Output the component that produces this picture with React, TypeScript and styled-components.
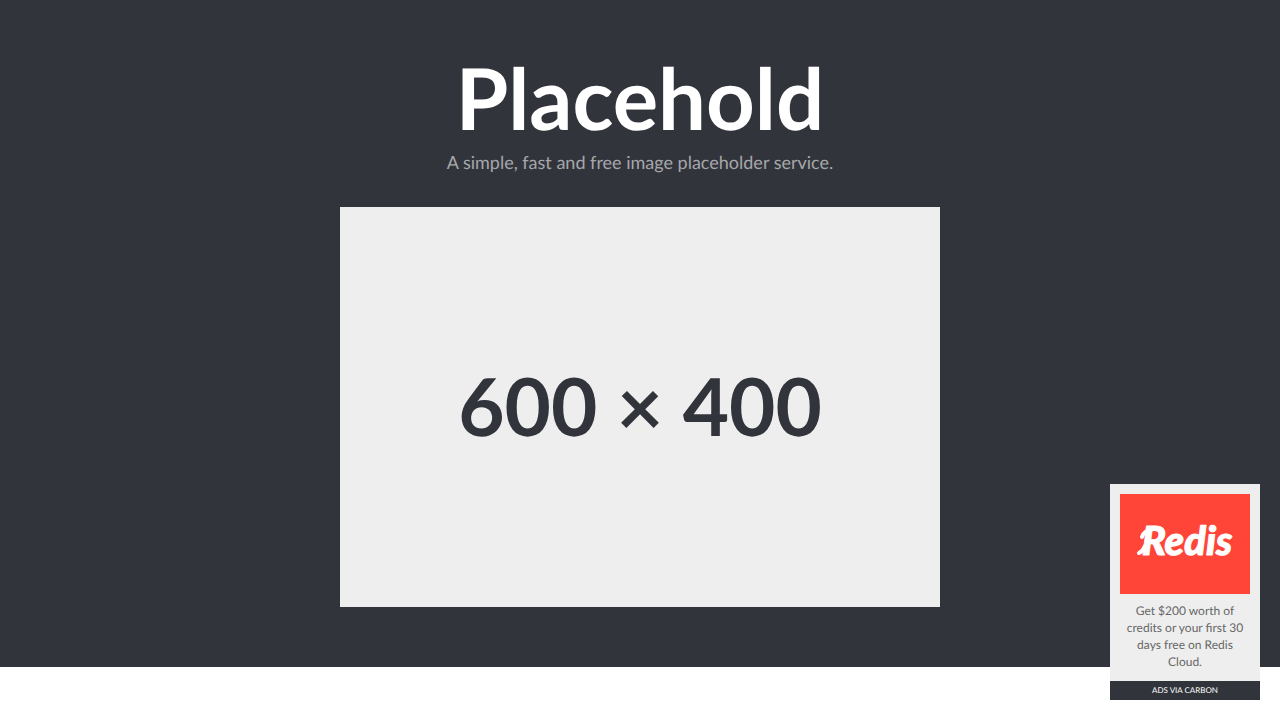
import React from "react";
import styled, { createGlobalStyle } from "styled-components";

const ink = "#32343c";
const paper = "#eeeeee";

const GlobalStyle = createGlobalStyle`
  *, *::before, *::after { box-sizing: border-box; }
  body {
    margin: 0;
    background: #ffffff;
    font-family: Lato, "Liberation Sans", sans-serif;
    text-rendering: geometricPrecision;
  }
`;

const Hero = styled.header`
  display: flex;
  flex-direction: column;
  align-items: center;
  padding: 48px 20px 60px;
  background: ${ink};
  text-align: center;
`;

const Title = styled.h1`
  margin: 0;
  color: #ffffff;
  font-size: 85px;
  font-weight: 700;
  line-height: 100px;
`;

const Tagline = styled.p`
  margin: 0 0 30px;
  color: #a6a7aa;
  font-size: 18px;
  line-height: 29px;
`;

const Placeholder = styled.div`
  display: flex;
  align-items: center;
  justify-content: center;
  width: 100%;
  max-width: 600px;
  aspect-ratio: 3 / 2;
  padding-bottom: 2px;
  background: ${paper};
  color: ${ink};
  font-size: 80px;
  font-weight: 700;
  line-height: 96px;
`;

const Ad = styled.aside`
  position: fixed;
  right: 20px;
  bottom: 20px;
  width: 150px;
  background: ${paper};
  text-align: center;
`;

const AdLink = styled.a`
  display: block;
  padding: 10px 10px 11px;
  color: #666666;
  font-size: 12px;
  line-height: 17px;
  text-decoration: none;
`;

const AdBanner = styled.svg`
  display: block;
  width: 100%;
  height: 100px;
  margin-bottom: 8px;
  background: #ff4438;
`;

const Wordmark = styled.text`
  fill: #ffffff;
  stroke: #ffffff;
  stroke-width: 1px;
  stroke-linejoin: round;
  font-size: 40px;
  font-style: italic;
  font-weight: 900;
`;

const Flourish = styled.path`
  fill: none;
  stroke: #ffffff;
  stroke-width: 4px;
  stroke-linecap: round;
  stroke-linejoin: round;
`;

const AdText = styled.span`
  display: block;
`;

const AdSource = styled.a`
  display: block;
  background: ${ink};
  color: #ffffff;
  font-size: 8px;
  line-height: 19px;
  text-decoration: none;
  text-transform: uppercase;
`;

export default function App() {
  return (
    <>
      <GlobalStyle />
      <Hero>
        <Title>Placehold</Title>
        <Tagline>A simple, fast and free image placeholder service.</Tagline>
        <Placeholder>600 × 400</Placeholder>
      </Hero>
      <Ad>
        <AdLink href="#redis">
          <AdBanner viewBox="0 0 130 100" role="img" aria-label="Redis">
            <Wordmark x="67" y="61" textAnchor="middle">
              Redis
            </Wordmark>
            {/* swashes that lead into the word */}
            <Flourish d="M22 43 Q24 36 34 35" />
            <Flourish d="M19 59 Q23 57 25 52" />
          </AdBanner>
          <AdText>
            Get $200 worth of credits or your first 30 days free on Redis Cloud.
          </AdText>
        </AdLink>
        <AdSource href="#carbon">ads via Carbon</AdSource>
      </Ad>
    </>
  );
}
